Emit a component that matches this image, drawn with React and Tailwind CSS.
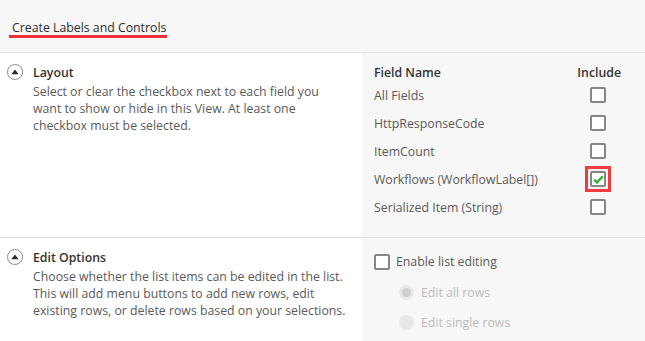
import { useState } from 'react'

const fields = [
  { name: 'All Fields', checked: false },
  { name: 'HttpResponseCode', checked: false },
  { name: 'ItemCount', checked: false },
  { name: 'Workflows (WorkflowLabel[])', checked: true, highlight: true },
  { name: 'Serialized Item (String)', checked: false },
]

function Toggle() {
  return (
    <span className="w-[16px] h-[16px] rounded-full border border-[#9a9a9a] bg-white shadow-[0_0_1px_rgba(0,0,0,0.2)] flex items-center justify-center shrink-0">
      <svg width="8" height="6" viewBox="0 0 8 6" className="-mt-[1px]">
        <path d="M4 0.5 L7.6 5.2 L0.4 5.2 Z" fill="#2b2b2b" />
      </svg>
    </span>
  )
}

function Checkbox({ checked }) {
  return (
    <span className="w-4 h-4 rounded-[2px] border-2 border-[#868686] bg-white flex items-center justify-center">
      {checked && (
        <svg width="11" height="9" viewBox="0 0 11 9">
          <path d="M1.2 4.6 L4 7.4 L9.8 1.4" stroke="#3aae3a" strokeWidth="2.4" fill="none" />
        </svg>
      )}
    </span>
  )
}

export default function App() {
  const [rows] = useState(fields)

  return (
    <div className="w-[645px] h-[341px] bg-white overflow-hidden text-[12.3px] leading-[17px] text-[#5a5a5a]" style={{ fontFamily: '"Open Sans", sans-serif' }}>
      {/* header */}
      <div className="h-[53px] bg-[#f7f7f7] border-b border-[#e3e3e3] pl-[12px] pt-[19px]">
        <span className="inline-block text-[#2e2e2e] border-b-[3px] border-[#f0303a] pr-[1px] -ml-[3px] pl-[3px] leading-[14px]">
          Create Labels and Controls
        </span>
      </div>

      {/* Layout section */}
      <div className="flex border-b border-[#e3e3e3]">
        <div className="w-[362px] flex gap-[10px] pl-[7px] pt-[11px]">
          <div><Toggle /></div>
          <div className="w-[314px]">
            <div className="text-[#333] font-semibold">Layout</div>
            <div className="mt-[2px]">
              Select or clear the checkbox next to each field you want to show or hide in this View. At least one checkbox must be selected.
            </div>
          </div>
        </div>
        <div className="flex-1 bg-[#f7f7f7] pl-[12px] pr-[24px] pt-[11px] pb-[16px]">
          <div className="flex justify-between text-[#333] font-semibold">
            <span>Field Name</span>
            <span>Include</span>
          </div>
          <div>
            {rows.map((f) => (
              <div key={f.name} className="h-[28px] flex items-center justify-between">
                <span>{f.name}</span>
                <span className="w-[46px] flex justify-center">
                  {f.highlight ? (
                    <span className="border-[3px] border-[#f03a3d] p-[2px]">
                      <Checkbox checked={f.checked} />
                    </span>
                  ) : (
                    <Checkbox checked={f.checked} />
                  )}
                </span>
              </div>
            ))}
          </div>
        </div>
      </div>

      {/* Edit Options section */}
      <div className="flex h-[120px]">
        <div className="w-[362px] flex gap-[10px] pl-[7px] pt-[11px]">
          <div><Toggle /></div>
          <div className="w-[314px]">
            <div className="text-[#333] font-semibold">Edit Options</div>
            <div className="mt-[2px]">
              Choose whether the list items can be edited in the list. This will add menu buttons to add new rows, edit existing rows, or delete rows based on your selections.
            </div>
          </div>
        </div>
        <div className="flex-1 bg-[#f7f7f7] pl-[12px] pt-[15px]">
          <label className="flex items-center gap-[6px]">
            <Checkbox checked={false} />
            <span>Enable list editing</span>
          </label>
          <div className="pl-[25px] mt-[14px] flex flex-col gap-[13px] text-[#bbb]">
            <div className="flex items-center gap-[7px]">
              <span className="w-[15px] h-[15px] rounded-full bg-[#e8e8e8] flex items-center justify-center">
                <span className="w-[9px] h-[9px] rounded-full bg-[#cfcfcf]" />
              </span>
              <span>Edit all rows</span>
            </div>
            <div className="flex items-center gap-[7px]">
              <span className="w-[15px] h-[15px] rounded-full bg-[#e8e8e8]" />
              <span>Edit single rows</span>
            </div>
          </div>
        </div>
      </div>
    </div>
  )
}
